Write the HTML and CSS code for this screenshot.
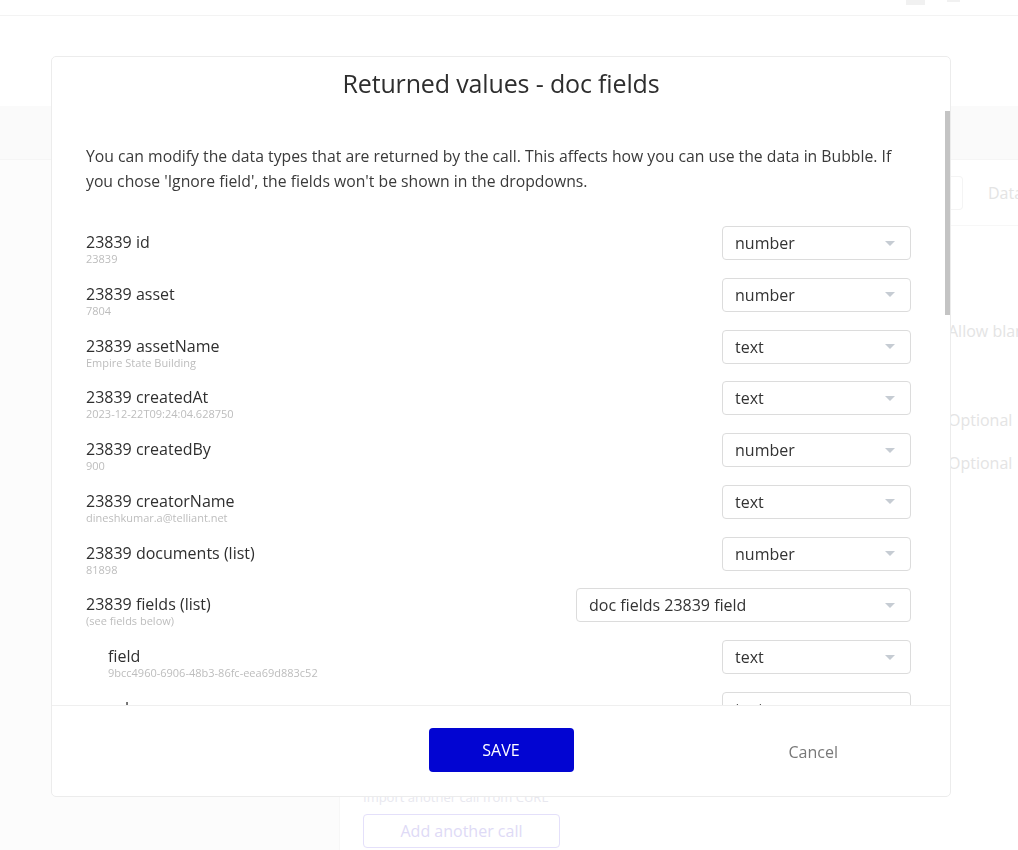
FILE: index.html
```html
<!DOCTYPE html>
<html lang="en">
<head>
<meta charset="utf-8">
<title>Returned values - doc fields</title>
<link rel="stylesheet" href="styles.css">
</head>
<body>
<div class="page">
  <div class="topbar">
    <span class="tb-icon tb-square"></span>
    <span class="tb-icon tb-bar"></span>
  </div>
  <div class="gap-top"></div>
  <div class="band"></div>
  <div class="workspace">
    <div class="sidebar"></div>
    <div class="main">
      <div class="data-row">
        <span class="ghost-box"></span>
        <span class="ghost-text">Data</span>
      </div>
      <div class="props">
        <div class="ghost-text allow">Allow blank</div>
        <div class="ghost-text opt1">Optional</div>
        <div class="ghost-text opt2">Optional</div>
      </div>
      <div class="calls">
        <div class="import">Import another call from CURL</div>
        <button class="add-call">Add another call</button>
      </div>
    </div>
  </div>
</div>

<div class="modal">
  <div class="modal-head">
    <h2 class="modal-title">Returned values - doc fields</h2>
  </div>
  <div class="modal-body">
    <p class="intro">You can modify the data types that are returned by the call. This affects how you can use the data in Bubble. If you chose 'Ignore field', the fields won't be shown in the dropdowns.</p>
    <div class="fields">
      <div class="field-row">
        <div class="field-label"><div class="fname">23839 id</div><div class="fval">23839</div></div>
        <div class="select"><span>number</span><i class="caret"></i></div>
      </div>
      <div class="field-row">
        <div class="field-label"><div class="fname">23839 asset</div><div class="fval">7804</div></div>
        <div class="select"><span>number</span><i class="caret"></i></div>
      </div>
      <div class="field-row">
        <div class="field-label"><div class="fname">23839 assetName</div><div class="fval">Empire State Building</div></div>
        <div class="select"><span>text</span><i class="caret"></i></div>
      </div>
      <div class="field-row">
        <div class="field-label"><div class="fname">23839 createdAt</div><div class="fval">2023-12-22T09:24:04.628750</div></div>
        <div class="select"><span>text</span><i class="caret"></i></div>
      </div>
      <div class="field-row">
        <div class="field-label"><div class="fname">23839 createdBy</div><div class="fval">900</div></div>
        <div class="select"><span>number</span><i class="caret"></i></div>
      </div>
      <div class="field-row">
        <div class="field-label"><div class="fname">23839 creatorName</div><div class="fval">dineshkumar.a@telliant.net</div></div>
        <div class="select"><span>text</span><i class="caret"></i></div>
      </div>
      <div class="field-row">
        <div class="field-label"><div class="fname">23839 documents (list)</div><div class="fval">81898</div></div>
        <div class="select"><span>number</span><i class="caret"></i></div>
      </div>
      <div class="field-row">
        <div class="field-label"><div class="fname">23839 fields (list)</div><div class="fval">(see fields below)</div></div>
        <div class="select wide"><span>doc fields 23839 field</span><i class="caret"></i></div>
      </div>
      <div class="field-row nested">
        <div class="field-label"><div class="fname">field</div><div class="fval">9bcc4960-6906-48b3-86fc-eea69d883c52</div></div>
        <div class="select"><span>text</span><i class="caret"></i></div>
      </div>
      <div class="field-row nested">
        <div class="field-label"><div class="fname">value</div><div class="fval">Elevator</div></div>
        <div class="select"><span>text</span><i class="caret"></i></div>
      </div>
      <div class="field-row nested">
        <div class="field-label"><div class="fname">id</div><div class="fval">412</div></div>
        <div class="select"><span>number</span><i class="caret"></i></div>
      </div>
      <div class="field-row">
        <div class="field-label"><div class="fname">23839 folder</div><div class="fval">null</div></div>
        <div class="select"><span>text</span><i class="caret"></i></div>
      </div>
      <div class="field-row">
        <div class="field-label"><div class="fname">23839 name</div><div class="fval">Inspection report</div></div>
        <div class="select"><span>text</span><i class="caret"></i></div>
      </div>
      <div class="field-row">
        <div class="field-label"><div class="fname">23839 status</div><div class="fval">active</div></div>
        <div class="select"><span>text</span><i class="caret"></i></div>
      </div>
      <div class="field-row">
        <div class="field-label"><div class="fname">23839 template</div><div class="fval">118</div></div>
        <div class="select"><span>number</span><i class="caret"></i></div>
      </div>
      <div class="field-row">
        <div class="field-label"><div class="fname">23839 templateName</div><div class="fval">Elevator checklist</div></div>
        <div class="select"><span>text</span><i class="caret"></i></div>
      </div>
      <div class="field-row">
        <div class="field-label"><div class="fname">23839 updatedAt</div><div class="fval">2023-12-22T09:24:04.628750</div></div>
        <div class="select"><span>text</span><i class="caret"></i></div>
      </div>
      <div class="field-row">
        <div class="field-label"><div class="fname">23839 updatedBy</div><div class="fval">900</div></div>
        <div class="select"><span>number</span><i class="caret"></i></div>
      </div>
      <div class="field-row">
        <div class="field-label"><div class="fname">23839 updaterName</div><div class="fval">dineshkumar.a@telliant.net</div></div>
        <div class="select"><span>text</span><i class="caret"></i></div>
      </div>
      <div class="field-row">
        <div class="field-label"><div class="fname">23839 version</div><div class="fval">1</div></div>
        <div class="select"><span>number</span><i class="caret"></i></div>
      </div>
      <div class="field-row">
        <div class="field-label"><div class="fname">23839 workOrder</div><div class="fval">5521</div></div>
        <div class="select"><span>number</span><i class="caret"></i></div>
      </div>
      <div class="field-row">
        <div class="field-label"><div class="fname">23839 workOrderName</div><div class="fval">Annual inspection</div></div>
        <div class="select"><span>text</span><i class="caret"></i></div>
      </div>
      <div class="field-row">
        <div class="field-label"><div class="fname">23839 location</div><div class="fval">New York</div></div>
        <div class="select"><span>text</span><i class="caret"></i></div>
      </div>
      <div class="field-row">
        <div class="field-label"><div class="fname">23839 signed</div><div class="fval">false</div></div>
        <div class="select"><span>yes / no</span><i class="caret"></i></div>
      </div>
      <div class="field-row">
        <div class="field-label"><div class="fname">23839 archived</div><div class="fval">false</div></div>
        <div class="select"><span>yes / no</span><i class="caret"></i></div>
      </div>
      <div class="field-row">
        <div class="field-label"><div class="fname">23839 notes</div><div class="fval">null</div></div>
        <div class="select"><span>Ignore field</span><i class="caret"></i></div>
      </div>
      <div class="field-row">
        <div class="field-label"><div class="fname">23839 priority</div><div class="fval">2</div></div>
        <div class="select"><span>number</span><i class="caret"></i></div>
      </div>
      <div class="field-row">
        <div class="field-label"><div class="fname">23839 type</div><div class="fval">inspection</div></div>
        <div class="select"><span>text</span><i class="caret"></i></div>
      </div>
      <div class="field-row">
        <div class="field-label"><div class="fname">23839 company</div><div class="fval">74</div></div>
        <div class="select"><span>number</span><i class="caret"></i></div>
      </div>
      <div class="field-row">
        <div class="field-label"><div class="fname">23839 companyName</div><div class="fval">Telliant</div></div>
        <div class="select"><span>text</span><i class="caret"></i></div>
      </div>
    </div>
  </div>
  <div class="scroll-thumb"></div>
  <div class="modal-foot">
    <span></span>
    <button class="btn-save">SAVE</button>
    <button class="btn-cancel">Cancel</button>
  </div>
</div>
</body>
</html>
```

FILE: styles.css
```css
* { box-sizing: border-box; }

html, body {
  margin: 0;
  padding: 0;
  height: 100%;
  overflow: hidden;
}

body {
  font-family: "Open Sans", "DejaVu Sans", sans-serif;
  background: #ffffff;
  color: #333333;
}

/* ---------- faint background page ---------- */
.page {
  display: flex;
  flex-direction: column;
  height: 850px;
  overflow: hidden;
}

.topbar {
  height: 16px;
  border-bottom: 1px solid #f3f3f3;
  display: flex;
  justify-content: flex-end;
  align-items: flex-start;
  gap: 22px;
  padding-right: 58px;
  flex: none;
}

.tb-icon { display: block; }
.tb-square { width: 19px; height: 5px; background: #f1f1f1; }
.tb-bar { width: 13px; height: 2px; background: #f1f1f1; }

.gap-top { height: 90px; flex: none; }

.band {
  height: 54px;
  background: #fafafa;
  border-bottom: 1px solid #f5f5f5;
  flex: none;
}

.workspace {
  flex: 1;
  display: flex;
  min-width: 0;
}

.sidebar {
  width: 340px;
  background: #fcfcfc;
  border-right: 1px solid #f7f7f7;
  flex: none;
}

.main {
  flex: 1;
  min-width: 0;
  display: flex;
  flex-direction: column;
  padding-left: 23px;
  overflow: hidden;
}

.data-row {
  height: 66px;
  border-bottom: 1px solid #f7f7f7;
  display: flex;
  align-items: center;
  padding-left: 577px;
  gap: 25px;
}

.ghost-box {
  width: 23px;
  height: 34px;
  flex: none;
  border: 1px solid #f4f4f4;
  border-left: none;
  border-radius: 0 4px 4px 0;
}

.ghost-text {
  font-size: 16px;
  color: #e4e4e4;
  white-space: nowrap;
}

.props {
  padding-left: 585px;
  display: flex;
  flex-direction: column;
}

.allow { margin-top: 94px; }
.opt1 { margin-top: 67px; }
.opt2 { margin-top: 21px; }

.calls {
  margin-top: auto;
  padding-bottom: 2px;
}

.import {
  font-size: 13px;
  color: #e8e8ef;
  line-height: 16px;
  margin-bottom: 9px;
}

.add-call {
  width: 197px;
  height: 34px;
  border: 1px solid #e4e0fa;
  border-radius: 4px;
  background: #ffffff;
  color: #dedaf6;
  font-family: "Open Sans", "DejaVu Sans", sans-serif;
  font-size: 16px;
}

/* ---------- modal ---------- */
.modal {
  position: fixed;
  left: 51px;
  top: 56px;
  width: 900px;
  height: 741px;
  background: #ffffff;
  border: 1px solid #ececec;
  border-radius: 5px;
  display: flex;
  flex-direction: column;
  overflow: hidden;
}

.modal-head {
  height: 54px;
  display: flex;
  align-items: center;
  justify-content: center;
  flex: none;
}

.modal-title {
  margin: 0 0 3px 0;
  font-size: 25px;
  font-weight: 400;
  color: #2e2e2e;
  letter-spacing: -0.15px;
}

.modal-body {
  flex: 1;
  overflow-y: scroll;
  scrollbar-width: none;
  padding: 33px 39px 20px 34px;
}

.modal-body::-webkit-scrollbar { width: 0; display: none; }

.scroll-thumb {
  position: absolute;
  right: 0;
  top: 54px;
  width: 5px;
  height: 204px;
  background: #c4c4c4;
}

.intro {
  margin: 0 0 32px 0;
  font-size: 15.75px;
  line-height: 25px;
  color: #3a3a3a;
  padding-right: 6px;
}

.fields {
  display: flex;
  flex-direction: column;
}

.field-row {
  display: flex;
  justify-content: space-between;
  align-items: flex-start;
  height: 34px;
  margin-bottom: 17.75px;
}

.field-row.nested .field-label { padding-left: 22px; }

.field-label {
  padding-top: 6px;
}

.fname {
  font-size: 16px;
  line-height: 20px;
  color: #2f2f2f;
  white-space: nowrap;
}

.fval {
  font-size: 11px;
  line-height: 13px;
  color: #bdbdbd;
  white-space: nowrap;
}

.select {
  width: 189px;
  height: 34px;
  border: 1px solid #dcdcdc;
  border-radius: 4px;
  display: flex;
  align-items: center;
  justify-content: space-between;
  padding: 0 15px 0 12px;
  font-size: 16px;
  color: #333333;
  flex: none;
}

.select.wide { width: 335px; }

.caret {
  width: 0;
  height: 0;
  border-left: 5px solid transparent;
  border-right: 5px solid transparent;
  border-top: 5px solid #c6ccd3;
}

.modal-foot {
  height: 91px;
  flex: none;
  border-top: 1px solid #efefef;
  display: grid;
  grid-template-columns: 1fr 145px 1fr;
  align-items: start;
  padding-top: 22px;
}

.btn-save {
  height: 44px;
  border: none;
  border-radius: 4px;
  background: #0205d2;
  color: #ffffff;
  font-family: "Open Sans", "DejaVu Sans", sans-serif;
  font-size: 16px;
}

.btn-cancel {
  justify-self: start;
  margin-left: 215px;
  height: 44px;
  padding: 4px 0 0 0;
  border: none;
  background: transparent;
  color: #787878;
  font-family: "Open Sans", "DejaVu Sans", sans-serif;
  font-size: 16px;
}
```
